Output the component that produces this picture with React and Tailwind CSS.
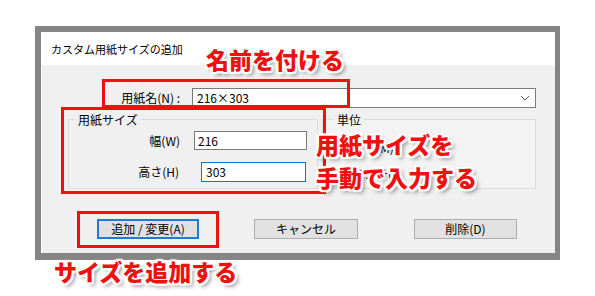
import React from 'react'

const ui = "font-['Noto_Sans_CJK_JP','Noto_Sans',sans-serif]"
const note =
  "absolute whitespace-nowrap font-['Noto_Sans_CJK_JP',sans-serif] font-black text-[23px] leading-none text-[#ef1010] [text-shadow:0_0_1px_#fff,0_0_2px_#fff,2px_0_1px_#fff,-2px_0_1px_#fff,0_2px_1px_#fff,0_-2px_1px_#fff,2px_2px_1px_#fff,-2px_-2px_1px_#fff,2px_-2px_1px_#fff,-2px_2px_1px_#fff,3px_3px_4px_rgba(0,0,0,0.5)]"

function Chevron() {
  return (
    <svg width="10" height="6" viewBox="0 0 10 6" className="mr-[5px]">
      <path d="M1 1 L5 5 L9 1" fill="none" stroke="#555" strokeWidth="1" />
    </svg>
  )
}

function Radio({ checked, label }) {
  return (
    <div className="flex items-center gap-[4px]">
      <span className="flex h-[13px] w-[13px] items-center justify-center rounded-full border border-[#333] bg-white">
        {checked && <span className="h-[5px] w-[5px] rounded-full bg-[#333]" />}
      </span>
      <span>{label}</span>
    </div>
  )
}

function Button({ children, primary, className = '' }) {
  return (
    <div
      className={`flex h-[20px] items-center justify-center bg-[#e1e1e1] ${
        primary ? 'border-2 border-[#1f7ad3]' : 'border border-[#adadad]'
      } ${className}`}
    >
      {children}
    </div>
  )
}

export default function App() {
  return (
    <div className={`relative h-[296px] w-[595px] overflow-hidden bg-white text-[12px] text-black ${ui}`}>
      {/* dialog frame */}
      <div className="ml-[35px] mt-[26px] h-[234px] w-[525px] bg-[#858585] pb-[7px] pl-[6px] pr-[5px] pt-[6px]">
        <div className="flex h-full flex-col border-l border-t border-white bg-white">
          <div className="flex h-[32px] items-center pl-[9px] text-[11px]">カスタム用紙サイズの追加</div>

          <div className="flex-1 bg-[#f0f0f0]">
            {/* paper name */}
            <div className="mt-[23px] flex items-center">
              <div className="w-[150px] pr-[12px] text-right">用紙名(N) :</div>
              <div className="flex h-[20px] w-[344px] items-center justify-between border border-[#7a7a7a] bg-white pl-[4px]">
                <span>216×303</span>
                <Chevron />
              </div>
            </div>

            {/* groups */}
            <div className="mt-[4px] flex gap-[4px] pl-[26px]">
              <fieldset className="h-[77px] w-[250px] border border-[#dcdcdc]">
                <legend className="ml-[6px] px-[3px] leading-[15px]">用紙サイズ</legend>
                <div className="mt-[4px] flex items-center">
                  <div className="w-[111px] text-right">幅(W)</div>
                  <div className="ml-[14px] flex h-[19px] w-[113px] items-center border border-[#7a7a7a] bg-white pl-[3px]">216</div>
                </div>
                <div className="mt-[12px] flex items-center">
                  <div className="w-[110px] text-right">高さ(H)</div>
                  <div className="ml-[22px] flex h-[20px] w-[105px] items-center border border-[#0078d7] bg-white pl-[4px]">303</div>
                </div>
              </fieldset>

              <fieldset className="h-[77px] w-[214px] border border-[#dcdcdc] bg-[#f3f3f3]">
                <legend className="ml-[11px] px-[3px] leading-[15px]">単位</legend>
                <div className="ml-[12px] mt-[12px] flex flex-col gap-[8px]">
                  <Radio checked label="ミリ(M)" />
                  <Radio label="インチ(I)" />
                </div>
              </fieldset>
            </div>

            {/* buttons */}
            <div className="mt-[30px] flex pl-[55px]">
              <Button primary className="w-[102px]">追加 / 変更(A)</Button>
              <Button className="ml-[55px] w-[104px]">キャンセル</Button>
              <Button className="ml-[56px] w-[103px]">削除(D)</Button>
            </div>
          </div>
        </div>
      </div>

      {/* red highlight boxes */}
      <div className="absolute left-[102px] top-[79px] h-[29px] w-[248px] border-[3px] border-[#ee1111]" />
      <div className="absolute left-[61px] top-[107px] h-[87px] w-[265px] border-[3px] border-[#ee1111]" />
      <div className="absolute left-[77px] top-[211px] h-[37px] w-[142px] border-[3px] border-[#ee1111]" />

      {/* annotations */}
      <div className={`${note} left-[206px] top-[48px]`}>名前を付ける</div>
      <div className={`${note} left-[316px] top-[128px]`}>
        <div className="leading-[33px]">用紙サイズを</div>
        <div className="leading-[33px]">手動で入力する</div>
      </div>
      <div className={`${note} left-[54px] top-[260px]`}>サイズを追加する</div>
    </div>
  )
}
